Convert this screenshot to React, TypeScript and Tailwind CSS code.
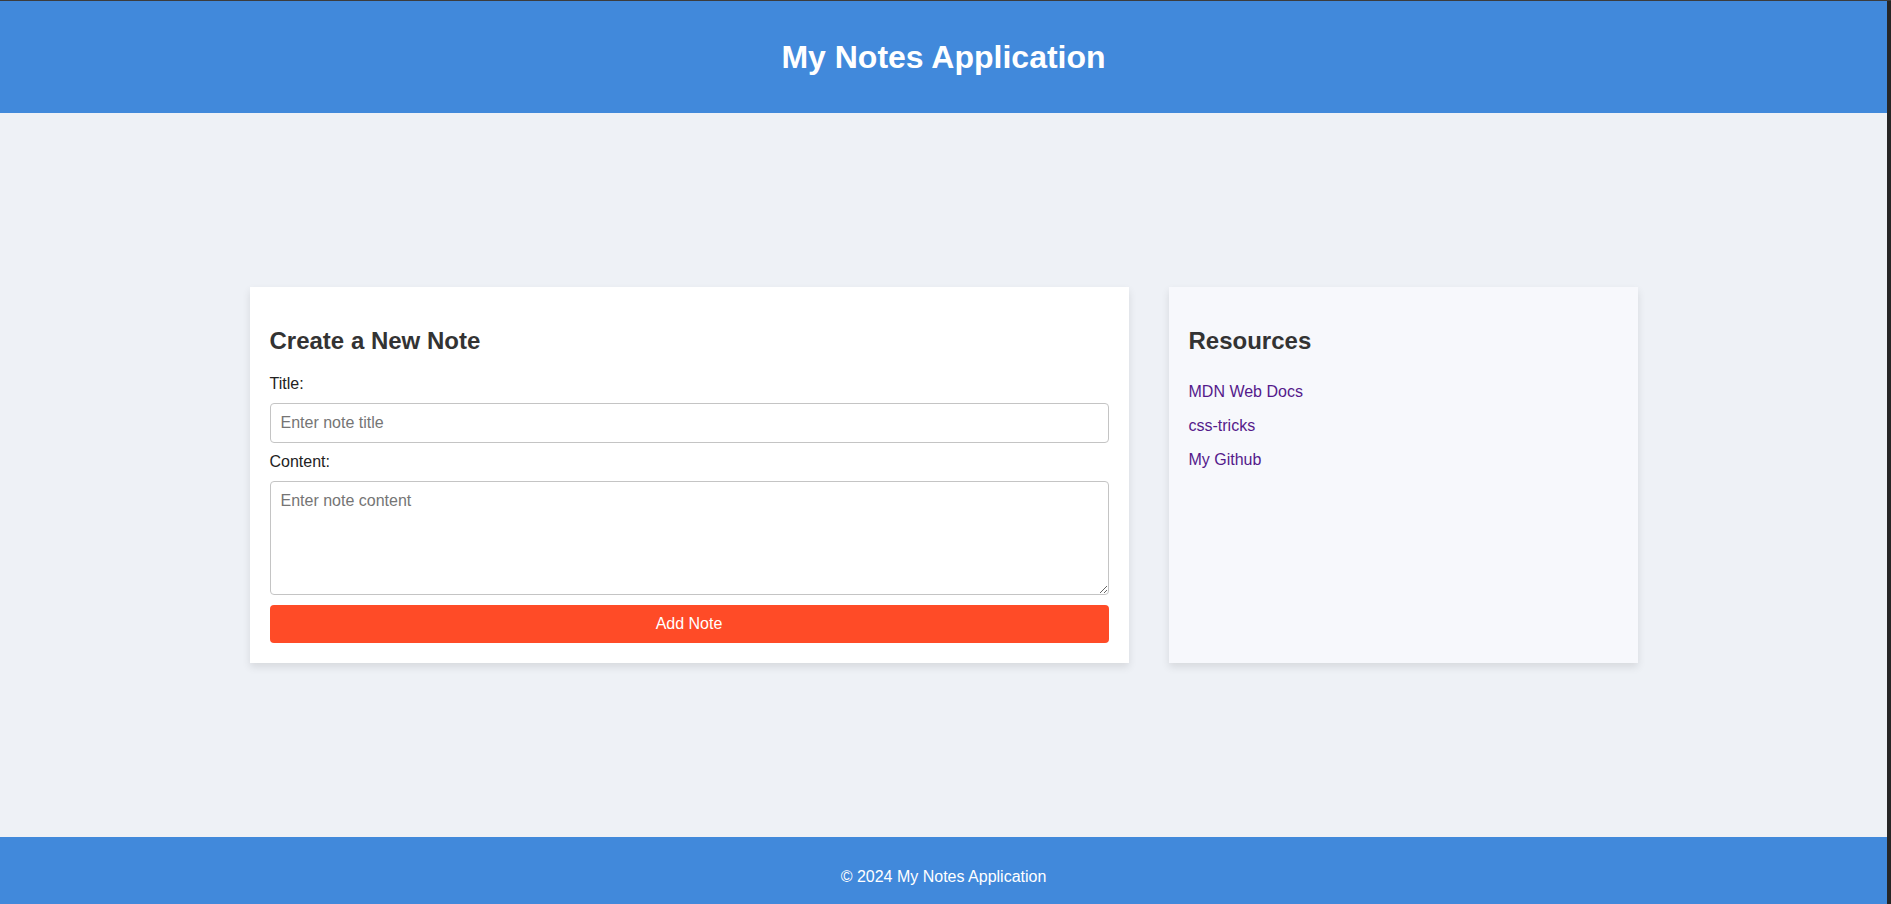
const resources = [
  { label: "MDN Web Docs", href: "#mdn" },
  { label: "css-tricks", href: "#css-tricks" },
  { label: "My Github", href: "#github" },
];

function NoteForm() {
  return (
    <section className="w-[879px] bg-white px-[20px] pt-[40px] pb-[20px] shadow-[0_4px_8px_rgba(0,0,0,0.1)]">
      <h2 className="mb-[20px] text-[24px] font-bold leading-[normal] text-[#333]">Create a New Note</h2>
      <form onSubmit={(e) => e.preventDefault()} className="flex flex-col">
        <label htmlFor="note-title" className="mb-[10px] text-[16px] leading-[normal] text-[#222]">
          Title:
        </label>
        <input
          id="note-title"
          type="text"
          placeholder="Enter note title"
          className="mb-[10px] h-[40px] w-full rounded-[4px] border border-[#c4c4c4] bg-white px-[10px] text-[16px] leading-[normal] text-[#222] placeholder:text-[#757575] outline-none"
        />
        <label htmlFor="note-content" className="mb-[10px] text-[16px] leading-[normal] text-[#222]">
          Content:
        </label>
        <textarea
          id="note-content"
          placeholder="Enter note content"
          className="mb-[10px] h-[114px] w-full resize-y rounded-[4px] border border-[#c4c4c4] bg-white p-[10px] text-[16px] leading-[normal] text-[#222] placeholder:text-[#757575] outline-none"
        />
        <button
          type="submit"
          className="h-[38px] w-full rounded-[4px] bg-[#ff4b27] text-[16px] leading-[normal] text-white"
        >
          Add Note
        </button>
      </form>
    </section>
  );
}

function Resources() {
  return (
    <aside className="w-[469px] bg-[#f7f8fc] px-[20px] pt-[40px] pb-[20px] shadow-[0_4px_8px_rgba(0,0,0,0.1)]">
      <h2 className="mb-[20px] text-[24px] font-bold leading-[normal] text-[#333]">Resources</h2>
      <ul className="flex flex-col gap-[16px] pt-[8px]">
        {resources.map((r) => (
          <li key={r.label} className="text-[16px] leading-[normal]">
            <a href={r.href} className="text-[#551a8b]">
              {r.label}
            </a>
          </li>
        ))}
      </ul>
    </aside>
  );
}

export default function App() {
  return (
    <div className="flex h-[904px] overflow-hidden border-t border-[#3c3c3c] bg-[#eef1f6] font-['Liberation_Sans',Arial,sans-serif]">
      <div className="flex flex-1 flex-col">
        <header className="flex h-[112px] items-center justify-center bg-[#4189db]">
          <h1 className="text-[32px] font-bold leading-[normal] text-white">My Notes Application</h1>
        </header>

        <main className="flex h-[724px] items-center justify-center">
          <div className="flex gap-[40px]">
            <NoteForm />
            <Resources />
          </div>
        </main>

        <footer className="flex-1 bg-[#4189db] pt-[31px] text-center text-[16px] leading-[normal] text-white">
          © 2024 My Notes Application
        </footer>
      </div>
      <div className="w-[4px] bg-[#262626]" />
    </div>
  );
}
